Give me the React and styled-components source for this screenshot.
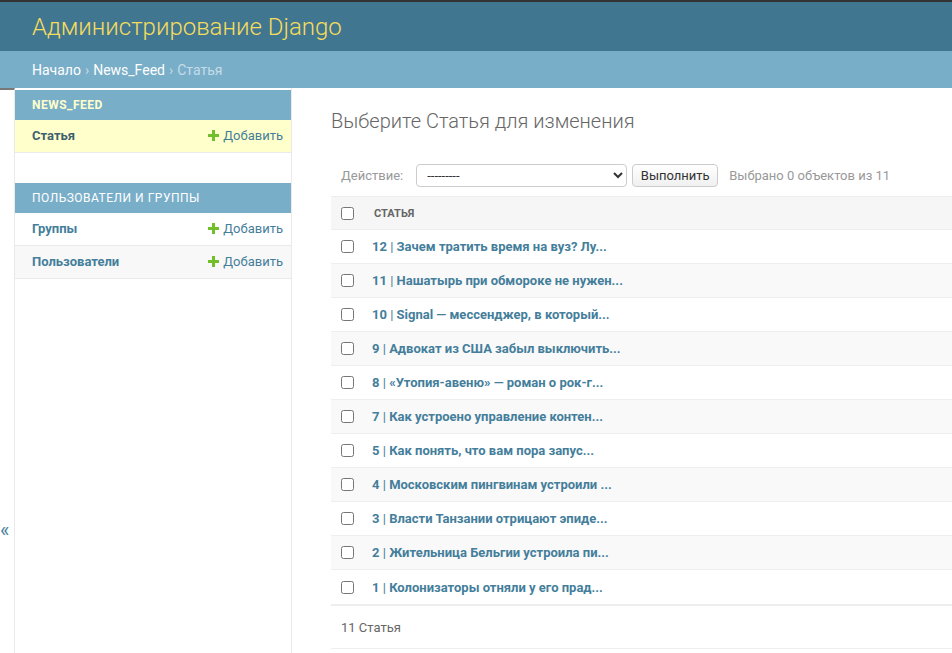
import React from 'react';
import styled, { createGlobalStyle } from 'styled-components';

const GlobalStyle = createGlobalStyle`
  html, body {
    margin: 0;
    padding: 0;
    background: #fff;
    overflow: hidden;
  }
  body {
    font-family: Roboto, "Liberation Sans", Arial, sans-serif;
    font-size: 14px;
    color: #333;
  }
  * { box-sizing: border-box; }
`;

const articles = [
  [12, 'Зачем тратить время на вуз? Лу...'],
  [11, 'Нашатырь при обмороке не нужен...'],
  [10, 'Signal — мессенджер, в который...'],
  [9, 'Адвокат из США забыл выключить...'],
  [8, '«Утопия-авеню» — роман о рок-г...'],
  [7, 'Как устроено управление контен...'],
  [5, 'Как понять, что вам пора запус...'],
  [4, 'Московским пингвинам устроили ...'],
  [3, 'Власти Танзании отрицают эпиде...'],
  [2, 'Жительница Бельгии устроила пи...'],
  [1, 'Колонизаторы отняли у его прад...'],
];

function Plus() {
  return (
    <svg width="11" height="11" viewBox="0 0 11 11">
      <path d="M4 0h3v4h4v3H7v4H4V7H0V4h4z" fill="#70bf2b" />
    </svg>
  );
}

function App() {
  return (
    <>
      <GlobalStyle />
      <Page>
        <Header>
          <Branding>Администрирование Django</Branding>
        </Header>
        <Breadcrumbs>
          <a>Начало</a> › <a>News_Feed</a> › <Current>Статья</Current>
        </Breadcrumbs>
        <Main>
          <Toggle>«</Toggle>
          <Sidebar>
            <Module>
              <Caption current>NEWS_FEED</Caption>
              <ModelRow current>
                <ModelName current>Статья</ModelName>
                <AddLink><Plus />Добавить</AddLink>
              </ModelRow>
            </Module>
            <Module>
              <Caption>Пользователи и группы</Caption>
              <ModelRow>
                <ModelName>Группы</ModelName>
                <AddLink><Plus />Добавить</AddLink>
              </ModelRow>
              <ModelRow alt>
                <ModelName>Пользователи</ModelName>
                <AddLink><Plus />Добавить</AddLink>
              </ModelRow>
            </Module>
          </Sidebar>
          <Content>
            <Title>Выберите Статья для изменения</Title>
            <Actions>
              <Label>Действие:</Label>
              <Select defaultValue="">
                <option value="">---------</option>
              </Select>
              <GoButton>Выполнить</GoButton>
              <Counter>Выбрано 0 объектов из 11</Counter>
            </Actions>
            <Table>
              <HeadRow>
                <CheckCell><input type="checkbox" /></CheckCell>
                <HeadCell>Статья</HeadCell>
              </HeadRow>
              {articles.map(([id, title], i) => (
                <Row key={id} alt={i % 2 === 1}>
                  <CheckCell><input type="checkbox" /></CheckCell>
                  <LinkCell>{id} <Pipe>|</Pipe> {title}</LinkCell>
                </Row>
              ))}
            </Table>
            <Paginator>11 Статья</Paginator>
          </Content>
        </Main>
      </Page>
    </>
  );
}

export default App;

const Page = styled.div`
  height: 653px;
  display: flex;
  flex-direction: column;
  border-top: 2px solid #333;
`;

const Header = styled.div`
  background: #417690;
  height: 49px;
  display: flex;
  align-items: center;
  padding: 0 32px;
`;

const Branding = styled.h1`
  margin: 0;
  font-size: 24px;
  font-weight: 300;
  color: #f5dd5d;
`;

const Breadcrumbs = styled.div`
  background: #79aec8;
  height: 37px;
  padding: 0 32px;
  display: flex;
  align-items: center;
  gap: 4px;
  color: #c4dce8;
  font-size: 14px;
  a { color: #fff; }
`;

const Current = styled.span`
  color: #c4dce8;
`;

const Main = styled.div`
  flex: 1;
  display: flex;
  min-height: 0;
`;

const Toggle = styled.div`
  width: 15px;
  flex: none;
  border-top: 2px solid #787878;
  border-right: 1px solid #eaeaea;
  color: #447e9b;
  font-size: 20px;
  line-height: 20px;
  padding-top: 430px;
`;

const Sidebar = styled.div`
  width: 277px;
  flex: none;
  border-right: 1px solid #eaeaea;
  padding-top: 2px;
  display: flex;
  flex-direction: column;
  gap: 30px;
`;

const Module = styled.div`
  display: flex;
  flex-direction: column;
`;

const Caption = styled.div`
  background: #79aec8;
  height: 30px;
  padding: 0 17px;
  display: flex;
  align-items: center;
  font-size: 12px;
  letter-spacing: 0.5px;
  text-transform: uppercase;
  color: ${p => (p.current ? '#ffc' : '#fff')};
  font-weight: ${p => (p.current ? 700 : 400)};
`;

const ModelRow = styled.div`
  height: 33px;
  padding: 0 8px 2px 17px;
  display: flex;
  align-items: center;
  justify-content: space-between;
  border-bottom: 1px solid #eaeaea;
  background: ${p => (p.current ? '#ffc' : p.alt ? '#f8f8f8' : '#fff')};
`;

const ModelName = styled.span`
  font-size: 13px;
  font-weight: 700;
  color: ${p => (p.current ? '#3e5f70' : '#447e9b')};
`;

const AddLink = styled.span`
  display: flex;
  align-items: center;
  gap: 4px;
  font-size: 13px;
  color: #447e9b;
`;

const Content = styled.div`
  flex: 1;
  min-width: 0;
  padding: 20px 0 0 39px;
`;

const Title = styled.h1`
  margin: 0 0 25px;
  font-size: 20px;
  font-weight: 300;
  color: #666;
  line-height: 27px;
`;

const Actions = styled.div`
  height: 30px;
  padding: 0 10px;
  display: flex;
  align-items: center;
  font-size: 13px;
  color: #999;
  margin-bottom: 6px;
`;

const Label = styled.span`
  margin-right: 13px;
`;

const Select = styled.select`
  width: 211px;
  height: 23px;
  border: 1px solid #ccc;
  border-radius: 4px;
  font-size: 13px;
  color: #333;
  padding: 0 6px;
  background: #fff;
  font-family: Roboto, "Liberation Sans", Arial, sans-serif;
`;

const GoButton = styled.button`
  margin-left: 5px;
  height: 23px;
  width: 86px;
  border: 1px solid #ccc;
  border-radius: 4px;
  background: linear-gradient(#fff, #f0f0f0);
  font-size: 13px;
  color: #333;
  font-family: Roboto, "Liberation Sans", Arial, sans-serif;
  padding: 0;
`;

const Counter = styled.span`
  margin-left: 11px;
`;

const Table = styled.div`
  display: flex;
  flex-direction: column;
  border-bottom: 2px solid #eee;
`;

const HeadRow = styled.div`
  height: 34px;
  display: flex;
  align-items: center;
  background: #f6f6f6;
  border-top: 1px solid #eee;
  border-bottom: 1px solid #eee;
`;

const Row = styled.div`
  height: 34px;
  display: flex;
  align-items: center;
  border-bottom: 1px solid #eee;
  background: ${p => (p.alt ? '#f9f9f9' : '#fff')};
  &:last-child { border-bottom: none; }
`;

const CheckCell = styled.div`
  width: 41px;
  padding-left: 8px;
  display: flex;
  align-items: center;
  input { margin: 0 0 0 2px; width: 13px; height: 13px; }
`;

const HeadCell = styled.div`
  font-size: 11px;
  font-weight: 700;
  text-transform: uppercase;
  color: #666;
  padding-left: 2px;
`;

const LinkCell = styled.div`
  font-size: 13px;
  font-weight: 700;
  color: #447e9b;
`;

const Pipe = styled.span`
  font-weight: 400;
`;

const Paginator = styled.div`
  height: 43px;
  padding: 0 10px;
  display: flex;
  align-items: center;
  font-size: 13px;
  color: #666;
  border-bottom: 1px solid #eee;
`;
